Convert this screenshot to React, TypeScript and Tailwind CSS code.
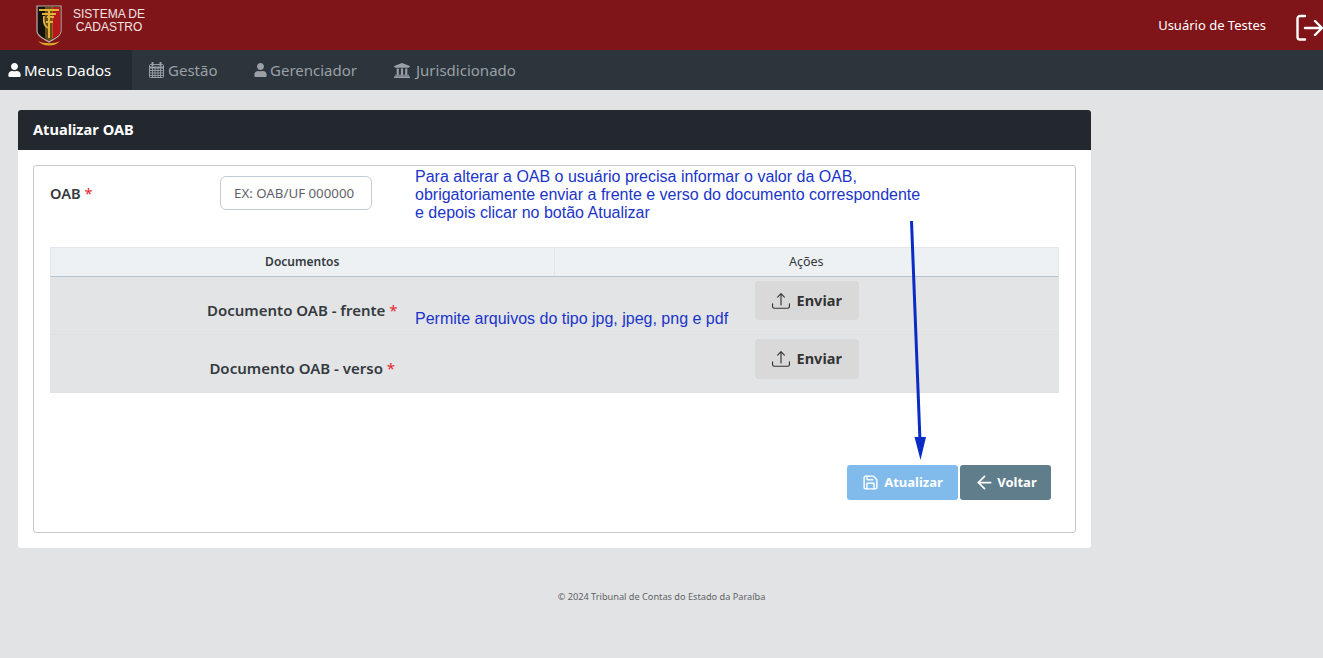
import React from 'react';
import { FaUser, FaUniversity } from 'react-icons/fa';
import { BsUpload } from 'react-icons/bs';
import { ArrowLeft, Save } from 'lucide-react';

const CalendarIcon = () => (
  <svg width="15" height="16" viewBox="0 0 15 16" fill="none" stroke="currentColor" strokeWidth="1">
    <rect x="0.5" y="2.5" width="14" height="13" rx="1" />
    <path d="M0.5 5.5 H14.5" strokeWidth="2" />
    <path d="M0.5 8.5 H14.5 M0.5 11 H14.5 M0.5 13.5 H14.5 M3.5 6 V15.5 M6 6 V15.5 M9 6 V15.5 M11.5 6 V15.5" strokeWidth="0.9" />
    <path d="M3.5 0.5 V3.5 M11.5 0.5 V3.5" strokeWidth="2" strokeLinecap="round" />
  </svg>
);

const navItems = [
  { label: 'Gestão', icon: <CalendarIcon />, width: 'w-[105px]', gap: 'gap-[4px]' },
  { label: 'Gerenciador', icon: <FaUser className="w-[13px] h-[14px]" />, width: 'w-[139px]', gap: 'gap-[3px]' },
  { label: 'Jurisdicionado', icon: <FaUniversity className="w-[18px] h-[17px]" />, width: 'w-[160px]', gap: 'gap-[5px]' },
];

const Logo = () => (
  <svg width="28" height="44" viewBox="0 0 28 44" className="shrink-0">
    <path d="M2 2 H26 V27 C26 33 18 35 14 38 C10 35 2 33 2 27 Z" fill="#14110f" stroke="#b9b2a6" strokeWidth="1.2" />
    <path d="M17 3 H25.4 V27 C25.4 32 20 33.5 17 35 Z" fill="#b3191c" />
    <path d="M10 3 H18 V34 L14 37 L10 34 Z" fill="#c9961f" opacity="0.45" />
    <path d="M4 6 H24 M7 10 H21 M14 5 V34" stroke="#e0b23a" strokeWidth="2" fill="none" />
    <path d="M9 12 C8 21 11 24 15 24 M19 13 H12 M18 18 H11" stroke="#e0b23a" strokeWidth="1.8" fill="none" />
    <path d="M3 37 C8 43 20 43 25 37 C20 40 8 40 3 37 Z" fill="#d9a928" />
  </svg>
);

const LogoutIcon = () => (
  <svg width="28" height="28" viewBox="0 0 28 28" fill="none" stroke="#fff" strokeWidth="2.4" strokeLinecap="round" strokeLinejoin="round">
    <path d="M9 2 H4 A2.5 2.5 0 0 0 1.5 4.5 V23 A2.5 2.5 0 0 0 4 25.5 H9" />
    <path d="M9 14 H26 M19 7 L26 14 L19 21" />
  </svg>
);

const Req = () => <span className="text-[#e3262e] font-normal">*</span>;

const EnviarButton = ({ height }: { height: string }) => (
  <button type="button" className={`${height} w-[104px] flex items-center justify-center gap-[7px] rounded-[4px] bg-[#d9d9d9] text-[#343434] text-[14.5px] font-bold`}>
    <BsUpload className="w-[18px] h-[18px]" />
    Enviar
  </button>
);

export default function App() {
  return (
    <div className="relative min-h-[658px] bg-[#e2e3e5] font-['Noto_Sans','Open_Sans',sans-serif] text-[#343a40]">
      {/* topo */}
      <header className="h-[50px] bg-[#7f1519] flex items-center justify-between text-white">
        <div className="flex items-center pl-[35px] pt-[1px]">
          <Logo />
          <div className="ml-[9px] w-[74px] -mt-[9px] text-center text-[12px] leading-[13.5px] text-[#f3e4e4] font-['Liberation_Sans',sans-serif]">
            SISTEMA DE CADASTRO
          </div>
        </div>
        <div className="flex items-center">
          <span className="text-[13px] mr-[30px] mt-[1px]">Usuário de Testes</span>
          <div className="mr-[-1px] mt-[5px]"><LogoutIcon /></div>
        </div>
      </header>

      {/* menu */}
      <nav className="h-[40px] bg-[#2c343c] flex items-center text-[15px]">
        <div className="w-[132px] h-full bg-[#242a31] flex items-center pl-[8px] gap-[3px] text-white">
          <FaUser className="w-[13px] h-[14px]" />
          Meus Dados
        </div>
        {navItems.map((item) => (
          <div key={item.label} className={`${item.width} ${item.gap} pl-[17px] h-full flex items-center text-[#9aa0a6]`}>
            {item.icon}
            {item.label}
          </div>
        ))}
      </nav>

      <main className="pt-[20px] px-[18px]">
        <section className="w-[1073px] h-[438px] bg-white rounded-[3px]">
          <div className="h-[40px] bg-[#23282f] rounded-t-[3px] flex items-center pl-[15px] text-white text-[14.6px] font-bold">
            Atualizar OAB
          </div>
          <div className="p-[15px]">
            <div className="h-[368px] border border-[#c8c8c8] rounded-[3px] flex flex-col px-[16px] pt-[9px]">
              <div className="flex items-center h-[35px]">
                <label className="w-[170px] text-[14.6px] font-semibold mt-[2px]">OAB <Req /></label>
                <input
                  className="w-[152px] h-[34px] border border-[#c3ccd6] rounded-[6px] px-[13px] text-[13.3px] outline-none placeholder:text-[#5f6368]"
                  placeholder="EX: OAB/UF 000000"
                />
              </div>

              <div className="mt-[37px] w-[1009px]">
                <div className="h-[30px] grid grid-cols-2 bg-[#eef1f4] border border-[#e3e6ea] border-b-[#b8c2cc] text-[12px] font-semibold pt-[1px]">
                  <div className="flex items-center justify-center border-r border-[#e3e6ea] -mt-[1px]">Documentos</div>
                  <div className="flex items-center justify-center font-normal text-[12.5px]">Ações</div>
                </div>
                <div className="h-[58px] grid grid-cols-2 bg-[#e3e4e6] border-b border-[#dfe0e2]">
                  <div className="flex items-center justify-center pt-[9px] text-[15px] font-semibold">
                    <span>Documento OAB - frente <Req /></span>
                  </div>
                  <div className="flex justify-center pt-[4px]"><EnviarButton height="h-[39px]" /></div>
                </div>
                <div className="h-[58px] grid grid-cols-2 bg-[#e3e4e6] border-b border-[#dfe0e2]">
                  <div className="flex items-center justify-center pt-[9px] text-[15px] font-semibold">
                    <span>Documento OAB - verso <Req /></span>
                  </div>
                  <div className="flex justify-center pt-[4px]"><EnviarButton height="h-[40px]" /></div>
                </div>
              </div>

              <div className="mt-[72px] flex justify-end gap-[2px] pr-[8px] text-[13px] font-bold text-white">
                <button type="button" className="w-[111px] h-[35px] rounded-[3px] bg-[#80bbec] flex items-center justify-center gap-[5px]">
                  <Save className="w-[17px] h-[17px]" />
                  Atualizar
                </button>
                <button type="button" className="w-[91px] h-[35px] rounded-[3px] bg-[#607d8b] flex items-center justify-center gap-[2px]">
                  <ArrowLeft className="w-[21px] h-[21px]" />
                  Voltar
                </button>
              </div>
            </div>
          </div>
        </section>
      </main>

      <footer className="mt-[43px] text-center text-[9.2px] leading-[12px] text-[#5f6368]">
        © 2024 Tribunal de Contas do Estado da Paraíba
      </footer>

      {/* anotações sobre a tela */}
      <div className="absolute left-[415px] top-[168px] w-[560px] text-[16px] leading-[18px] text-[#1a35c9] font-['Liberation_Sans',sans-serif]">
        Para alterar a OAB o usuário precisa informar o valor da OAB,<br />
        obrigatoriamente enviar a frente e verso do documento correspondente<br />
        e depois clicar no botão Atualizar
      </div>
      <div className="absolute left-[415px] top-[310px] text-[16px] leading-[18px] text-[#1a35c9] font-['Liberation_Sans',sans-serif]">
        Permite arquivos do tipo jpg, jpeg, png e pdf
      </div>
      <svg className="absolute left-[900px] top-[215px]" width="40" height="250" viewBox="0 0 40 250">
        <path d="M11.5 6 L20 226" stroke="#0b2cc4" strokeWidth="3" fill="none" />
        <path d="M14.5 222 L26 222 L20.5 245 Z" fill="#0b2cc4" />
      </svg>
    </div>
  );
}
